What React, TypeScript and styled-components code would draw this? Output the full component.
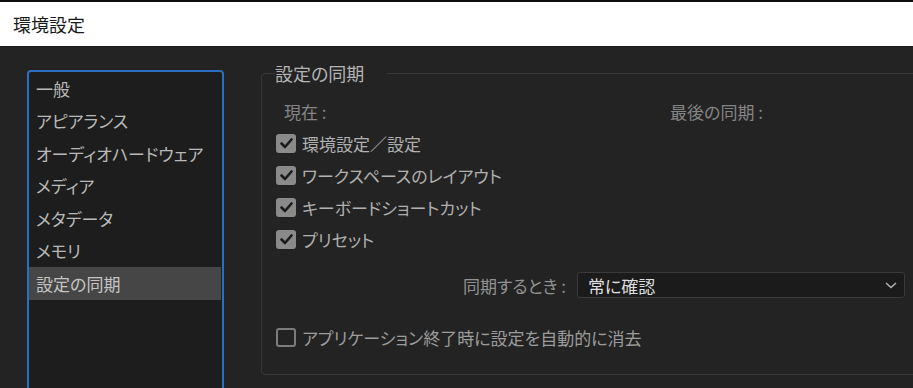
import styled, { createGlobalStyle } from "styled-components";

const GlobalStyle = createGlobalStyle`
  html, body {
    margin: 0;
    padding: 0;
    background: #232323;
    overflow: hidden;
  }
  * {
    box-sizing: border-box;
  }
`;

const sidebarItems = [
  "一般",
  "アピアランス",
  "オーディオハードウェア",
  "メディア",
  "メタデータ",
  "メモリ",
  "設定の同期",
];

const syncOptions = [
  { label: "環境設定／設定", checked: true },
  { label: "ワークスペースのレイアウト", checked: true },
  { label: "キーボードショートカット", checked: true },
  { label: "プリセット", checked: true },
];

export default function App() {
  return (
    <>
      <GlobalStyle />
      <Window>
        <TitleBar>環境設定</TitleBar>
        <Body>
          <Sidebar>
            {sidebarItems.map((item) => (
              <SidebarItem key={item} $active={item === "設定の同期"}>
                {item}
              </SidebarItem>
            ))}
          </Sidebar>
          <Group>
            <Legend>設定の同期</Legend>
            <StatusRow>
              <span>現在 :</span>
              <span>最後の同期 :</span>
            </StatusRow>
            {syncOptions.map((opt) => (
              <CheckRow key={opt.label}>
                <CheckBox checked={opt.checked} />
                <CheckLabel>{opt.label}</CheckLabel>
              </CheckRow>
            ))}
            <SyncRow>
              <SyncLabel>同期するとき :</SyncLabel>
              <Select>
                <span>常に確認</span>
                <svg width="12" height="7" viewBox="0 0 12 7">
                  <polyline
                    points="1,1 6,5.5 11,1"
                    fill="none"
                    stroke="#b4b4b4"
                    strokeWidth="1.5"
                  />
                </svg>
              </Select>
            </SyncRow>
            <CheckRow $spaced>
              <CheckBox checked={false} />
              <CheckLabel $dim>アプリケーション終了時に設定を自動的に消去</CheckLabel>
            </CheckRow>
          </Group>
        </Body>
      </Window>
    </>
  );
}

function CheckBox({ checked }: { checked: boolean }) {
  return (
    <Box $checked={checked}>
      {checked && (
        <svg width="19" height="19" viewBox="0 0 19 19">
          <polyline
            points="4.5,9.5 8,13 14.5,5.5"
            fill="none"
            stroke="#1c1c1c"
            strokeWidth="2.6"
            strokeLinecap="round"
            strokeLinejoin="round"
          />
        </svg>
      )}
    </Box>
  );
}

const Window = styled.div`
  width: 921px;
  height: 388px;
  display: flex;
  flex-direction: column;
  border-top: 2px solid #0e0e0e;
  font-family: "Noto Sans CJK JP", "Noto Sans", sans-serif;
  font-feature-settings: "palt";
  font-size: 17px;
  overflow: hidden;
`;

const TitleBar = styled.div`
  height: 45px;
  flex: none;
  display: flex;
  align-items: center;
  padding-left: 13px;
  background: #ffffff;
  color: #1a1a1a;
  font-size: 18px;
  border-bottom: 1px solid #1a1a1a;
`;

const Body = styled.div`
  flex: 1;
  display: flex;
  align-items: flex-start;
  padding-left: 27px;
  gap: 37px;
`;

const Sidebar = styled.div`
  width: 197px;
  height: 340px;
  flex: none;
  margin-top: 23px;
  border: 2px solid #2d6ec2;
  border-radius: 4px;
  background: #1d1d1d;
  display: flex;
  flex-direction: column;
`;

const SidebarItem = styled.div<{ $active?: boolean }>`
  height: 32.5px;
  display: flex;
  align-items: center;
  padding-left: 7px;
  margin-right: 1px;
  color: ${(p) => (p.$active ? "#c4c4c4" : "#b9b9b9")};
  background: ${(p) => (p.$active ? "#464646" : "transparent")};
  white-space: nowrap;
`;

const Group = styled.fieldset`
  flex: 1;
  margin: 16px 0 0;
  min-width: 0;
  border: 1px solid #383838;
  border-radius: 4px;
  padding: 12px 15px 21px 14px;
`;

const Legend = styled.legend`
  padding: 0 23px 0 0;
  margin-left: -1px;
  line-height: 20px;
  font-size: 18px;
  color: #b4b4b4;
`;

const StatusRow = styled.div`
  height: 32px;
  display: grid;
  grid-template-columns: 386px 1fr;
  align-items: center;
  padding-left: 8px;
  color: #858585;
`;

const CheckRow = styled.div<{ $spaced?: boolean }>`
  height: 32px;
  display: flex;
  align-items: center;
  gap: 6px;
  margin-top: ${(p) => (p.$spaced ? "23px" : "0")};
`;

const Box = styled.div<{ $checked: boolean }>`
  width: 20px;
  height: 19px;
  flex: none;
  border-radius: 3px;
  display: flex;
  align-items: center;
  justify-content: center;
  background: ${(p) => (p.$checked ? "#8a8a8a" : "transparent")};
  border: ${(p) => (p.$checked ? "none" : "2px solid #7c7c7c")};
`;

const CheckLabel = styled.span<{ $dim?: boolean }>`
  color: ${(p) => (p.$dim ? "#9c9c9c" : "#b0b0b0")};
  white-space: nowrap;
`;

const SyncRow = styled.div`
  margin-top: 17px;
  display: flex;
  align-items: center;
  gap: 11px;
  padding-left: 187px;
`;

const SyncLabel = styled.span`
  color: #929292;
  white-space: nowrap;
`;

const Select = styled.div`
  flex: 1;
  height: 26px;
  display: flex;
  align-items: center;
  justify-content: space-between;
  padding: 0 7px 0 10px;
  background: #1b1b1b;
  border: 1px solid #3a3a3a;
  border-radius: 3px;
  color: #dedede;
`;
